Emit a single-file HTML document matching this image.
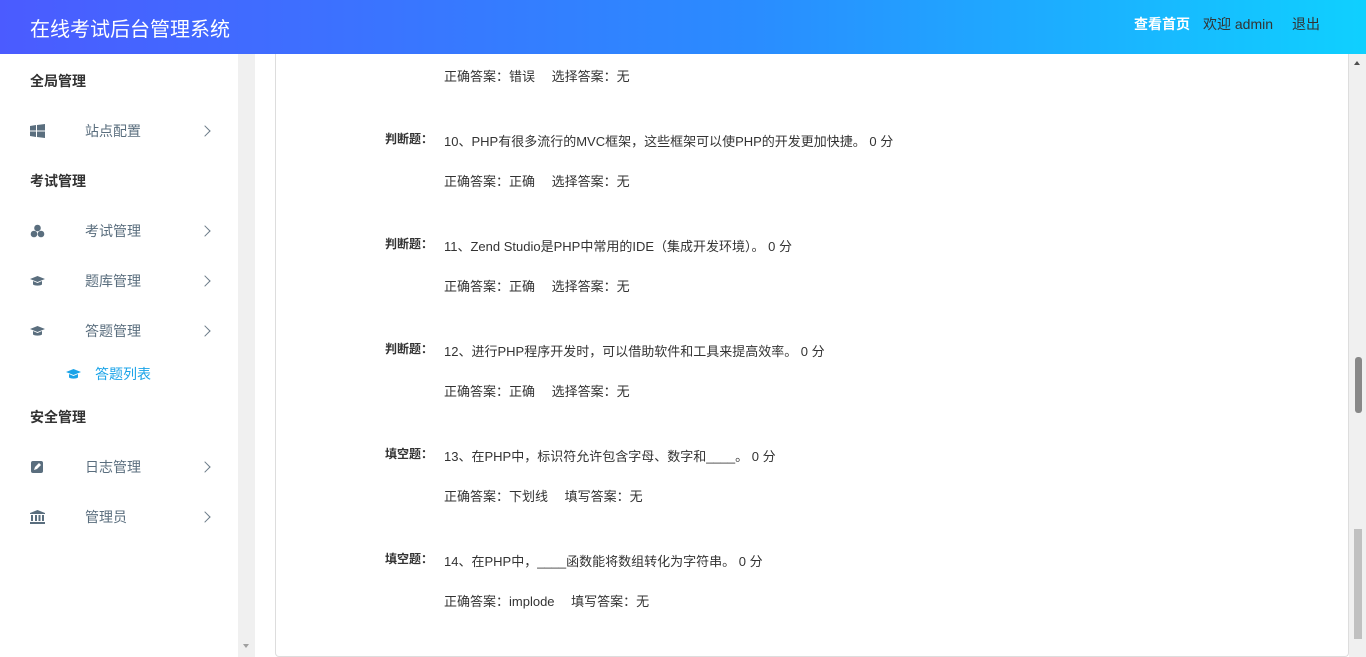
<!DOCTYPE html>
<html><head><meta charset="utf-8"><style>
*{margin:0;padding:0;box-sizing:border-box}
body{width:1366px;height:657px;overflow:hidden;font-family:"Liberation Sans","Noto Sans CJK SC",sans-serif;background:#fff;position:relative;color:#333}
.hd{position:absolute;left:0;top:0;width:1366px;height:54px;background:linear-gradient(90deg,#4b5bff,#2a8cff 55%,#0fd0ff)}
.hd .t{position:absolute;left:30px;top:13px;font-size:20px;color:#fff}
.hd .r{position:absolute;top:14px;font-size:14px}
.sb{position:absolute;left:0;top:54px;width:238px;height:603px;background:#fff}
.sbs{position:absolute;left:238px;top:54px;width:17px;height:603px;background:#f0f0f0}
.g{position:absolute;left:30px;font-size:14px;font-weight:bold;color:#333}
.it{position:absolute;left:0;width:238px;font-size:14px;color:#5a6e7e}
.it .ic{position:absolute;left:30px;top:0;width:15px;height:14px}
.it .n{position:absolute;left:85px;top:-3px}
.it .a{position:absolute;left:201px;width:8px;height:8px;border-right:1.3px solid #6b7b88;border-top:1.3px solid #6b7b88;transform:rotate(45deg);top:3px}
.card{position:absolute;left:275px;top:54px;width:1074px;height:603px;border-left:1px solid #ddd;border-right:1px solid #ddd;border-bottom:1px solid #ddd;border-radius:0 0 4px 4px}
.ps{position:absolute;left:1349px;top:54px;width:17px;height:603px;background:#f0f0f0}
.lb{position:absolute;left:385px;font-size:12px;font-weight:bold;color:#333}
.q{position:absolute;left:444px;font-size:13px;color:#333}
</style></head><body>
<div class="hd"><div class="t">在线考试后台管理系统</div>
<div class="r" style="left:1134px;color:#fff;font-weight:bold">查看首页</div>
<div class="r" style="left:1203px;color:#333">欢迎 admin</div>
<div class="r" style="left:1292px;color:#333">退出</div></div>
<div class="sb">
<div class="g" style="top:17px">全局管理</div>
<div class="it" style="top:70px"><svg class="ic" viewBox="0 0 15 14"><path d="M0 2l6-1v5.5H0zM7 1l8-1v6.5H7zM0 7.5h6V13l-6-1zM7 7.5h8V14l-8-1z" fill="#5a6e7e"/></svg><span class="n">站点配置</span><span class="a"></span></div>
<div class="g" style="top:117px">考试管理</div>
<div class="it" style="top:170px"><svg class="ic" viewBox="0 0 15 14"><circle cx="7.5" cy="4" r="3.3" fill="#5a6e7e"/><circle cx="4" cy="10" r="3.3" fill="#5a6e7e"/><circle cx="11" cy="10" r="3.3" fill="#5a6e7e"/></svg><span class="n">考试管理</span><span class="a"></span></div>
<div class="it" style="top:220px"><svg class="ic" viewBox="0 0 15 14"><path d="M0 5l7.5-3 7.5 3-7.5 3zM3 7v3.5c2 1.5 7 1.5 9 0V7l-4.5 2z" fill="#5a6e7e"/></svg><span class="n">题库管理</span><span class="a"></span></div>
<div class="it" style="top:270px"><svg class="ic" viewBox="0 0 15 14"><path d="M0 5l7.5-3 7.5 3-7.5 3zM3 7v3.5c2 1.5 7 1.5 9 0V7l-4.5 2z" fill="#5a6e7e"/></svg><span class="n">答题管理</span><span class="a"></span></div>
<div class="it" style="top:313px;color:#1aa3e8"><svg class="ic" style="left:66px" viewBox="0 0 15 14"><path d="M0 5l7.5-3 7.5 3-7.5 3zM3 7v3.5c2 1.5 7 1.5 9 0V7l-4.5 2z" fill="#1aa3e8"/></svg><span class="n" style="left:95px">答题列表</span></div>
<div class="g" style="top:353px">安全管理</div>
<div class="it" style="top:406px"><svg class="ic" viewBox="0 0 15 14"><rect x="1" y="1" width="12" height="12" rx="2" fill="#5a6e7e"/><path d="M4 10l1-3 4-4 2 2-4 4z" fill="#fff"/></svg><span class="n">日志管理</span><span class="a"></span></div>
<div class="it" style="top:456px"><svg class="ic" viewBox="0 0 15 14"><path d="M7.5 0L15 3v1H0V3zM1 5h2v6H1zM5 5h2v6H5zM8.5 5h2v6h-2zM12 5h2v6h-2zM0 12h15v2H0z" fill="#5a6e7e"/></svg><span class="n">管理员</span><span class="a"></span></div>
</div>
<div class="sbs"><div style="position:absolute;left:5px;top:590px;border:3.5px solid transparent;border-top:4px solid #a0a0a0"></div></div>
<div class="card"></div>
<div class="ps"><div style="position:absolute;left:5px;top:7px;border:3.5px solid transparent;border-bottom:4px solid #505050;border-top:0"></div>
<div style="position:absolute;left:6px;top:303px;width:7px;height:56px;background:#888;border-radius:3px"></div>
<div style="position:absolute;left:5px;top:475px;width:8px;height:110px;background:#c0c0c0"></div></div>

<div class="q" style="top:66px">正确答案：错误　 选择答案：无</div>
<div class="lb" style="top:130px">判断题：</div><div class="q" style="top:131px">10、PHP有很多流行的MVC框架，这些框架可以使PHP的开发更加快捷。 0 分</div>
<div class="q" style="top:171px">正确答案：正确　 选择答案：无</div>
<div class="lb" style="top:235px">判断题：</div><div class="q" style="top:236px">11、Zend Studio是PHP中常用的IDE（集成开发环境）。 0 分</div>
<div class="q" style="top:276px">正确答案：正确　 选择答案：无</div>
<div class="lb" style="top:340px">判断题：</div><div class="q" style="top:341px">12、进行PHP程序开发时，可以借助软件和工具来提高效率。 0 分</div>
<div class="q" style="top:381px">正确答案：正确　 选择答案：无</div>
<div class="lb" style="top:445px">填空题：</div><div class="q" style="top:446px">13、在PHP中，标识符允许包含字母、数字和____。 0 分</div>
<div class="q" style="top:486px">正确答案：下划线　 填写答案：无</div>
<div class="lb" style="top:550px">填空题：</div><div class="q" style="top:551px">14、在PHP中，____函数能将数组转化为字符串。 0 分</div>
<div class="q" style="top:591px">正确答案：implode　 填写答案：无</div>
</body></html>
